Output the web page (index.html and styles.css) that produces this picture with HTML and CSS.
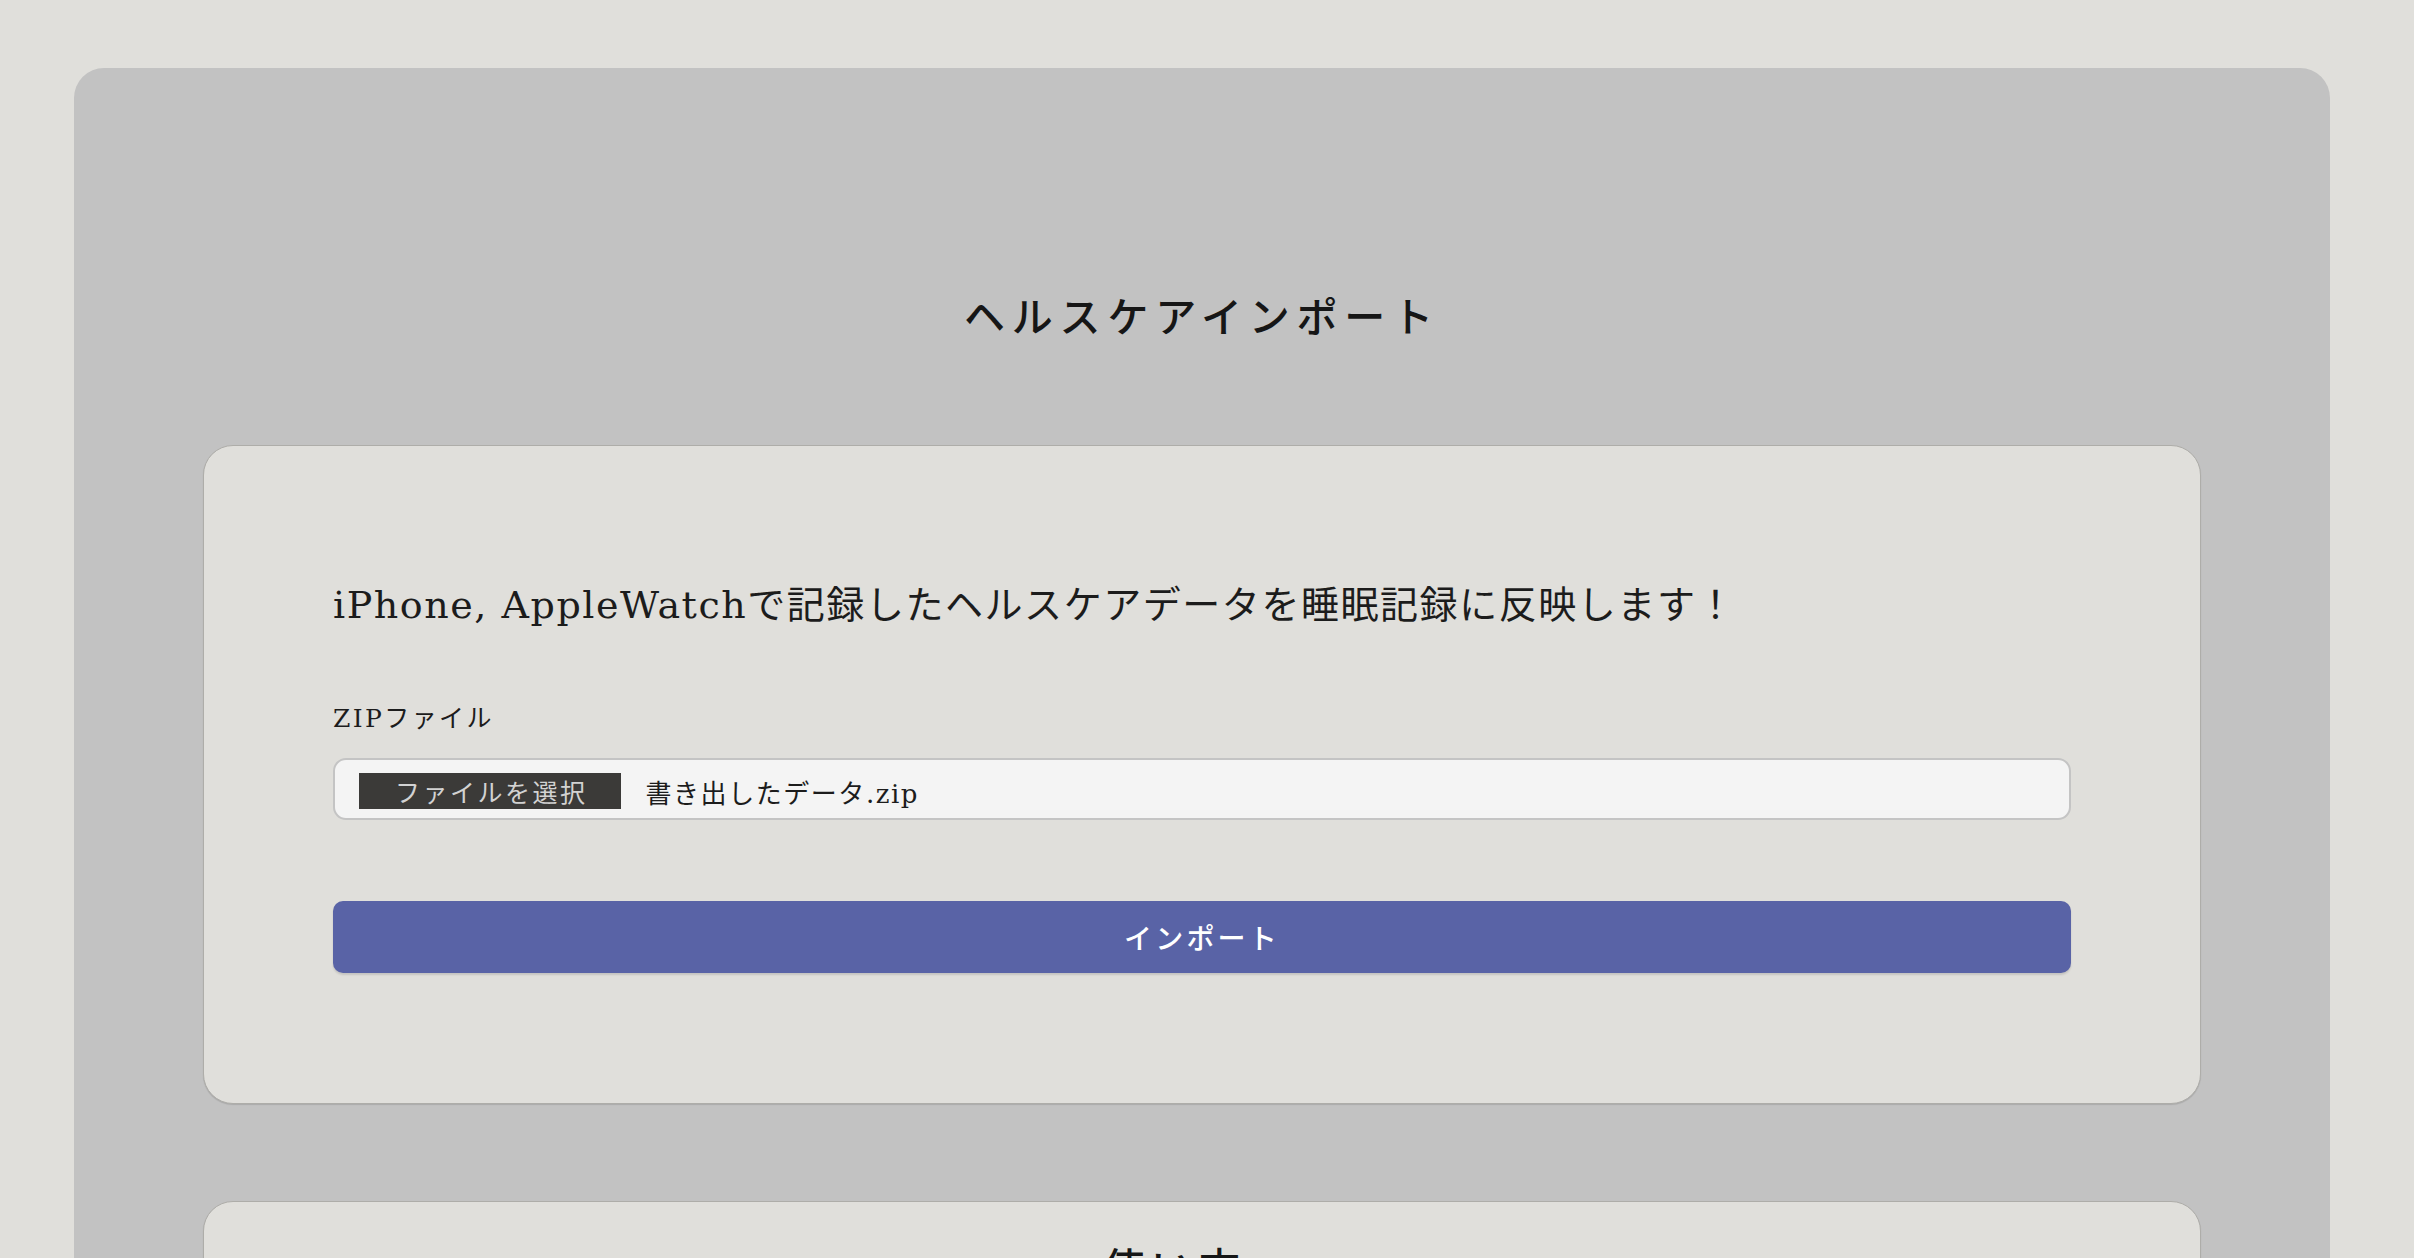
FILE: index.html
```html
<!DOCTYPE html>
<html lang="ja">
<head>
<meta charset="utf-8">
<title>ヘルスケアインポート</title>
<link rel="stylesheet" href="styles.css">
</head>
<body>
<main class="panel">
  <h1 class="page-title">ヘルスケアインポート</h1>
  <section class="card card-import">
    <p class="lead">iPhone, AppleWatchで記録したヘルスケアデータを睡眠記録に反映します！</p>
    <form class="import-form">
      <label class="field-label" for="zip">ZIPファイル</label>
      <label class="file-input" for="zip">
        <span class="file-btn">ファイルを選択</span>
        <span class="file-name">書き出したデータ.zip</span>
      </label>
      <button type="button" class="submit-btn">インポート</button>
    </form>
  </section>
  <section class="card card-howto">
    <h2 class="section-title">使い方</h2>
    <ol class="steps">
      <li>iPhoneの「ヘルスケア」アプリを開きます。</li>
      <li>プロフィールから「すべてのヘルスケアデータを書き出す」を選びます。</li>
      <li>書き出したZIPファイルを選択してインポートします。</li>
    </ol>
  </section>
</main>
</body>
</html>
```
FILE: styles.css
```css
html, body {
  margin: 0;
  padding: 0;
}
body {
  background: #e0dfdb;
  color: #1c1c1c;
  font-family: "DejaVu Serif", "Noto Sans CJK JP", serif;
  padding-top: 68px;
}
.panel {
  margin: 0 84px 0 74px;
  background: #c2c2c2;
  border-radius: 30px;
  padding: 217px 129px 120px;
}
.page-title {
  margin: 0 0 101px;
  text-align: center;
  font-family: "Noto Sans CJK JP", sans-serif;
  font-weight: 500;
  font-size: 41px;
  line-height: 59px;
  letter-spacing: 6.8px;
  color: #161616;
}
.card {
  background: #e0dfdb;
  border: 1px solid #aeada9;
  box-shadow: 0 1px 1px rgba(0, 0, 0, 0.12);
  border-radius: 30px;
}
.card-import {
  padding: 131px 129px 130px;
}
.lead {
  margin: 0;
  font-size: 38px;
  line-height: 57px;
  letter-spacing: 1.55px;
  font-family: "DejaVu Serif", "Noto Sans CJK JP", serif;
}
.import-form {
  display: flex;
  flex-direction: column;
}
.field-label {
  margin-top: 67px;
  font-size: 25px;
  line-height: 36px;
  letter-spacing: 2.4px;
}
.file-input {
  margin-top: 21px;
  box-sizing: border-box;
  height: 62px;
  display: flex;
  align-items: flex-start;
  gap: 25px;
  padding: 13px 24px 9px;
  background: #f4f4f4;
  border: 2px solid #c4c4c4;
  border-radius: 13px;
}
.file-btn {
  height: 36px;
  display: flex;
  align-items: center;
  padding: 0 33px 0 36px;
  background: #3b3a38;
  color: #d2d2d2;
  font-family: "Noto Sans CJK JP", sans-serif;
  font-size: 25px;
  letter-spacing: 2.5px;
}
.file-name {
  height: 36px;
  display: flex;
  align-items: center;
  font-size: 26px;
  letter-spacing: 1.55px;
  color: #1c1c1c;
}
.submit-btn {
  margin-top: 81px;
  height: 72px;
  border: none;
  border-radius: 10px;
  background: #5963a6;
  color: #ffffff;
  font-family: "Noto Sans CJK JP", sans-serif;
  font-weight: 500;
  font-size: 28px;
  letter-spacing: 3.2px;
  box-shadow: 0 2px 2px rgba(0, 0, 0, 0.12);
}
.card-howto {
  margin-top: 97px;
  padding: 34px 129px 120px;
}
.section-title {
  margin: 0;
  padding-right: 54px;
  text-align: center;
  font-family: "Noto Sans CJK JP", sans-serif;
  font-weight: 500;
  font-size: 41px;
  line-height: 59px;
  letter-spacing: 6.8px;
  color: #161616;
}
.steps {
  margin: 40px 0 0;
  font-size: 28px;
  line-height: 1.8;
}
```
